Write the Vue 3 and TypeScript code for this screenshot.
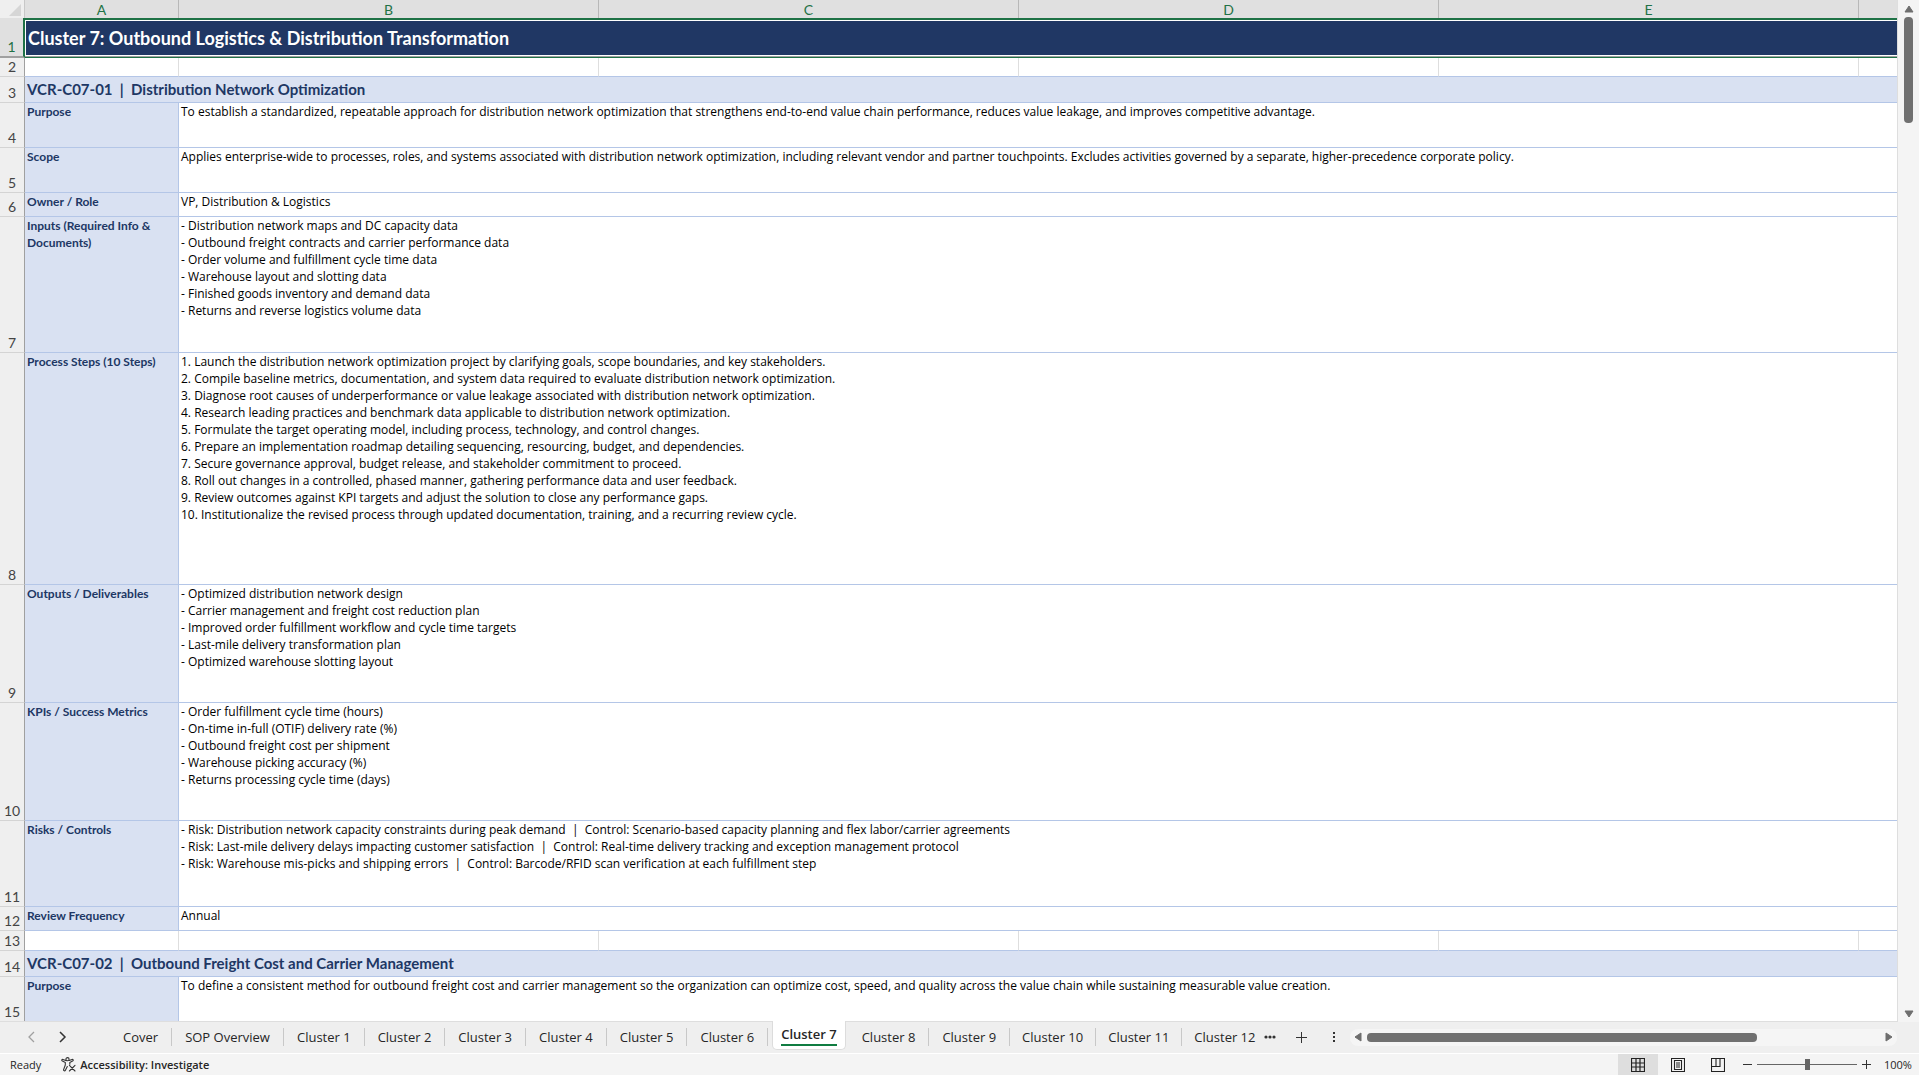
<script setup lang="ts">
interface Row {
  n: number
  h: number
  kind: 'field' | 'section' | 'blank'
  label?: string
  lines?: string[]
}

const columns = ['A', 'B', 'C', 'D', 'E', '']

const rows: Row[] = [
  { n: 2, h: 19, kind: 'blank' },
  { n: 3, h: 26, kind: 'section', label: 'VCR-C07-01  |  Distribution Network Optimization' },
  { n: 4, h: 45, kind: 'field', label: 'Purpose', lines: ['To establish a standardized, repeatable approach for distribution network optimization that strengthens end-to-end value chain performance, reduces value leakage, and improves competitive advantage.'] },
  { n: 5, h: 45, kind: 'field', label: 'Scope', lines: ['Applies enterprise-wide to processes, roles, and systems associated with distribution network optimization, including relevant vendor and partner touchpoints. Excludes activities governed by a separate, higher-precedence corporate policy.'] },
  { n: 6, h: 24, kind: 'field', label: 'Owner / Role', lines: ['VP, Distribution & Logistics'] },
  { n: 7, h: 136, kind: 'field', label: 'Inputs (Required Info & Documents)', lines: [
    '- Distribution network maps and DC capacity data',
    '- Outbound freight contracts and carrier performance data',
    '- Order volume and fulfillment cycle time data',
    '- Warehouse layout and slotting data',
    '- Finished goods inventory and demand data',
    '- Returns and reverse logistics volume data',
  ] },
  { n: 8, h: 232, kind: 'field', label: 'Process Steps (10 Steps)', lines: [
    '1. Launch the distribution network optimization project by clarifying goals, scope boundaries, and key stakeholders.',
    '2. Compile baseline metrics, documentation, and system data required to evaluate distribution network optimization.',
    '3. Diagnose root causes of underperformance or value leakage associated with distribution network optimization.',
    '4. Research leading practices and benchmark data applicable to distribution network optimization.',
    '5. Formulate the target operating model, including process, technology, and control changes.',
    '6. Prepare an implementation roadmap detailing sequencing, resourcing, budget, and dependencies.',
    '7. Secure governance approval, budget release, and stakeholder commitment to proceed.',
    '8. Roll out changes in a controlled, phased manner, gathering performance data and user feedback.',
    '9. Review outcomes against KPI targets and adjust the solution to close any performance gaps.',
    '10. Institutionalize the revised process through updated documentation, training, and a recurring review cycle.',
  ] },
  { n: 9, h: 118, kind: 'field', label: 'Outputs / Deliverables', lines: [
    '- Optimized distribution network design',
    '- Carrier management and freight cost reduction plan',
    '- Improved order fulfillment workflow and cycle time targets',
    '- Last-mile delivery transformation plan',
    '- Optimized warehouse slotting layout',
  ] },
  { n: 10, h: 118, kind: 'field', label: 'KPIs / Success Metrics', lines: [
    '- Order fulfillment cycle time (hours)',
    '- On-time in-full (OTIF) delivery rate (%)',
    '- Outbound freight cost per shipment',
    '- Warehouse picking accuracy (%)',
    '- Returns processing cycle time (days)',
  ] },
  { n: 11, h: 86, kind: 'field', label: 'Risks / Controls', lines: [
    '- Risk: Distribution network capacity constraints during peak demand  |  Control: Scenario-based capacity planning and flex labor/carrier agreements',
    '- Risk: Last-mile delivery delays impacting customer satisfaction  |  Control: Real-time delivery tracking and exception management protocol',
    '- Risk: Warehouse mis-picks and shipping errors  |  Control: Barcode/RFID scan verification at each fulfillment step',
  ] },
  { n: 12, h: 24, kind: 'field', label: 'Review Frequency', lines: ['Annual'] },
  { n: 13, h: 20, kind: 'blank' },
  { n: 14, h: 26, kind: 'section', label: 'VCR-C07-02  |  Outbound Freight Cost and Carrier Management' },
  { n: 15, h: 45, kind: 'field', label: 'Purpose', lines: ['To define a consistent method for outbound freight cost and carrier management so the organization can optimize cost, speed, and quality across the value chain while sustaining measurable value creation.'] },
]

const tabs = ['Cover', 'SOP Overview', 'Cluster 1', 'Cluster 2', 'Cluster 3', 'Cluster 4', 'Cluster 5', 'Cluster 6', 'Cluster 7', 'Cluster 8', 'Cluster 9', 'Cluster 10', 'Cluster 11', 'Cluster 12']
const activeTab = 'Cluster 7'
</script>

<template>
  <div class="app">
    <div class="work">
      <main class="sheet">
        <table>
          <colgroup>
            <col class="c-num" /><col class="c-a" /><col class="c-w" /><col class="c-w" /><col class="c-w" /><col class="c-w" /><col />
          </colgroup>
          <thead>
            <tr>
              <td class="corner"><svg width="12" height="12" viewBox="0 0 12 12"><path d="M12 0V12H0Z" fill="#d6d6d6" /></svg></td>
              <th v-for="c in columns" :key="c" scope="col" class="col-head">{{ c }}</th>
            </tr>
          </thead>
          <tbody>
            <tr class="title-row">
              <th scope="row" class="num on">1</th>
              <td colspan="6" class="title"><div class="title-fill">Cluster 7: Outbound Logistics &amp; Distribution Transformation</div></td>
            </tr>
            <tr v-for="r in rows" :key="r.n" :style="{ height: r.h + 'px' }">
              <th scope="row" class="num">{{ r.n }}</th>
              <template v-if="r.kind === 'blank'">
                <td v-for="c in columns" :key="c" class="blank"></td>
              </template>
              <td v-else-if="r.kind === 'section'" colspan="6" class="section">{{ r.label }}</td>
              <template v-else>
                <td class="label">{{ r.label }}</td>
                <td colspan="5" class="value"><div v-for="l in r.lines" :key="l">{{ l }}</div></td>
              </template>
            </tr>
          </tbody>
        </table>
      </main>
      <div class="vscroll">
        <svg width="10" height="8" viewBox="0 0 10 8"><path d="M5 1L9 7H1Z" fill="#6e6e6e" stroke="#6e6e6e" stroke-linejoin="round" /></svg>
        <div class="vthumb"></div>
        <svg class="down" width="10" height="8" viewBox="0 0 10 8"><path d="M5 7L9 1H1Z" fill="#6e6e6e" stroke="#6e6e6e" stroke-linejoin="round" /></svg>
      </div>
    </div>

    <nav class="tabbar">
      <button class="arrow" aria-label="Previous sheet"><svg width="8" height="12" viewBox="0 0 8 12"><path d="M7 1L2 6L7 11" fill="none" stroke="#a0a0a0" stroke-width="1.3" /></svg></button>
      <button class="arrow" aria-label="Next sheet"><svg width="8" height="12" viewBox="0 0 8 12"><path d="M1 1L6 6L1 11" fill="none" stroke="#333" stroke-width="1.5" /></svg></button>
      <div class="tabs">
        <button v-for="t in tabs" :key="t" class="tab" :class="{ active: t === activeTab }"><span>{{ t }}</span></button>
      </div>
      <button class="more" aria-label="More sheets"><svg width="12" height="4" viewBox="0 0 12 4"><g fill="#333"><circle cx="2" cy="2" r="1.6" /><circle cx="6" cy="2" r="1.6" /><circle cx="10" cy="2" r="1.6" /></g></svg></button>
      <button class="add" aria-label="New sheet"><svg width="11" height="11" viewBox="0 0 11 11"><path d="M5.5 0V11M0 5.5H11" stroke="#333" /></svg></button>
      <div class="grip"><svg width="2" height="10" viewBox="0 0 2 10"><path d="M0 0H2V2H0ZM0 4H2V6H0ZM0 8H2V10H0Z" fill="#333" /></svg></div>
      <div class="hscroll">
        <svg width="8" height="10" viewBox="0 0 8 10"><path d="M1 5L7 1V9Z" fill="#6e6e6e" stroke="#6e6e6e" stroke-linejoin="round" /></svg>
        <div class="htrack"><div class="hthumb"></div></div>
        <svg width="8" height="10" viewBox="0 0 8 10"><path d="M7 5L1 1V9Z" fill="#6e6e6e" stroke="#6e6e6e" stroke-linejoin="round" /></svg>
      </div>
    </nav>

    <footer class="status">
      <span class="ready">Ready</span>
      <button class="access">
        <svg width="15" height="15" viewBox="0 0 15 15" fill="none" stroke="#333" stroke-width="1.1" stroke-linejoin="round" stroke-linecap="round">
          <circle cx="6.5" cy="2.2" r="1.6" />
          <path d="M4.8 3.4L2 2.4C.8 2 .3 3.6 1.4 4.1L4.3 5.4V8L2.6 12.6C2.3 13.9 3.9 14.3 4.4 13.2L6.3 9.6M8.2 3.4L11 2.4C12.2 2 12.7 3.6 11.6 4.1L8.8 5.4V7.2" />
          <path d="M8.4 8.4L14 14M14 8.4L8.4 14" />
        </svg>
        <span>Accessibility: Investigate</span>
      </button>
      <div class="views">
        <button class="view on" aria-label="Normal"><svg width="14" height="14" viewBox="0 0 14 14"><path d="M.5 .5H13.5V13.5H.5ZM5 .5V13.5M9 .5V13.5M.5 5H13.5M.5 9H13.5" fill="none" stroke="#222" stroke-width="1.2" /></svg></button>
        <button class="view" aria-label="Page layout"><svg width="14" height="14" viewBox="0 0 14 14"><path d="M.5 .5H13.5V13.5H.5ZM3.5 2.5H10.5V11.5H3.5ZM5 5H9M5 7H9M5 9H9" fill="none" stroke="#222" stroke-width="1.1" /></svg></button>
        <button class="view" aria-label="Page break preview"><svg width="14" height="14" viewBox="0 0 14 14"><path d="M.5 .5H13.5V13.5H.5ZM.5 8.5H9V.5M5 .5V8.5" fill="none" stroke="#222" stroke-width="1.1" /></svg></button>
      </div>
      <button class="zoom" aria-label="Zoom out"><svg width="9" height="9" viewBox="0 0 9 9"><path d="M0 4.5H9" stroke="#333" /></svg></button>
      <input class="slider" type="range" min="10" max="190" value="100" aria-label="Zoom" />
      <button class="zoom" aria-label="Zoom in"><svg width="9" height="9" viewBox="0 0 9 9"><path d="M0 4.5H9M4.5 0V9" stroke="#333" /></svg></button>
      <span class="pct">100%</span>
    </footer>
  </div>
</template>

<style>
body { margin: 0; }
</style>

<style scoped>
.app { display: flex; flex-direction: column; height: 100vh; background: #efefef; font-family: "Open Sans", "Noto Sans", sans-serif; color: #262626; }
button { border: 0; padding: 0; background: none; font: inherit; color: inherit; }
svg { display: block; flex: none; }

.work { flex: 1; min-height: 0; display: flex; }
.sheet { flex: 1; min-width: 0; overflow: hidden; background: #fff; border-right: 1px solid #dedede; border-bottom: 1px solid #dedede; font-family: Lato, "Open Sans", sans-serif; }
table { width: 100%; table-layout: fixed; border-collapse: separate; border-spacing: 0; }
td, th { box-sizing: border-box; padding: 0; font-weight: 400; text-align: left; vertical-align: top; white-space: pre; }
.c-num { width: 25px; }
.c-a { width: 154px; }
.c-w { width: 420px; }

thead tr { height: 18px; }
.corner { background: #efefef; border-right: 1px solid #c8c8c8; }
.corner svg { margin: 4px 0 0 9px; }
.col-head { background: #e0e0e0; color: #1f7246; font-size: 14px; line-height: 16px; padding-top: 2px; text-align: center; border-right: 1px solid #b8b8b8; }
.num { background: #efefef; color: #444; border-right: 1px solid #a0a0a0; border-bottom: 1px solid #d4d4d4; font-size: 14px; line-height: 17px; padding-bottom: 1px; text-align: center; vertical-align: bottom; }
.num.on { background: #e0e0e0; color: #1f7246; border-right: 2px solid #1f7246; border-bottom: 2px solid #a0a0a0; }

.title-row { height: 40px; }
.title { height: 40px; border-top: 2px solid #1f7246; border-bottom: 1px solid #1f7246; background: #a0a0a0; }
.title-fill { height: 34px; margin-bottom: 1px; border: 1px solid #fff; border-right: 0; background: #203764; color: #fff; font-size: 18px; font-weight: 700; line-height: 34px; padding-left: 2px; }
.blank { border-right: 1px solid #dedede; border-bottom: 1px solid #b4c6e7; }
.blank:last-child, .col-head:last-child { border-right: 0; }
.section { background: #d9e1f2; border-bottom: 1px solid #b4c6e7; color: #203764; font-size: 15px; font-weight: 700; line-height: 25px; padding-left: 2px; }
.label { background: #d9e1f2; border-right: 1px solid #b4c6e7; border-bottom: 1px solid #b4c6e7; color: #203764; font-size: 12px; font-weight: 700; line-height: 17px; white-space: normal; padding: 0 2px; }
.value { border-bottom: 1px solid #b4c6e7; color: #000; font-family: "Open Sans", "Noto Sans", sans-serif; font-size: 12px; line-height: 17px; padding: 0 2px; }

.vscroll { width: 21px; display: flex; flex-direction: column; align-items: center; box-sizing: border-box; padding: 5px 0 4px; background: #f4f4f4; }
.vthumb { width: 9px; height: 106px; margin-top: 4px; border-radius: 4px; background: #707070; }
.down { margin-top: auto; }

.tabbar { height: 32px; margin-top: -1px; display: flex; align-items: center; font-size: 13px; }
.arrow { margin-left: 27px; }
.arrow + .arrow { margin-left: 24px; }
.tabs { display: flex; flex: none; align-items: center; align-self: stretch; width: 1146px; margin-left: 43px; overflow: hidden; }
.tab { flex: none; height: 18px; padding: 0 13px; border-right: 1px solid #c8c8c8; line-height: 18px; white-space: nowrap; }
.tab:nth-child(n + 12) { padding: 0 12px; }
.tab.active { align-self: flex-start; height: 29px; padding: 0 8px; margin: 0 3px 0 4px; box-sizing: border-box; background: #fff; border: 1px solid #dcdcdc; border-top: 0; border-radius: 0 0 5px 5px; font-weight: 600; }
.tab.active span { display: block; height: 22px; padding-top: 1px; box-sizing: border-box; border-bottom: 2px solid #107c41; }
.more { margin-left: 8px; }
.add { margin-left: 20px; }
.grip { margin-left: 26px; }
.hscroll { flex: 1; display: flex; align-items: center; height: 17px; margin: 0 22px 0 15px; padding: 0 4px; border-radius: 8px; background: #f5f5f5; }
.htrack { flex: 1; margin: 0 5px; }
.hthumb { width: 76%; height: 9px; border-radius: 4px; background: #707070; }

.status { height: 21px; display: flex; align-items: center; border-top: 1px solid #fff; background: #f4f4f4; font-size: 11px; }
.ready { margin-left: 10px; }
.access { display: flex; align-items: center; gap: 4px; margin-left: 20px; font-weight: 600; }
.views { display: flex; align-self: stretch; margin-left: auto; }
.view { display: flex; align-items: center; justify-content: center; width: 40px; }
.view.on { background: #dedede; }
.zoom { margin: 0 5px; }
.slider { width: 100px; margin: 0; appearance: none; height: 14px; background: linear-gradient(#666, #666) center / 100% 1px no-repeat; }
.slider::-webkit-slider-thumb { appearance: none; width: 5px; height: 11px; background: #666; }
.pct { width: 27px; margin: 0 8px; text-align: right; }
</style>
